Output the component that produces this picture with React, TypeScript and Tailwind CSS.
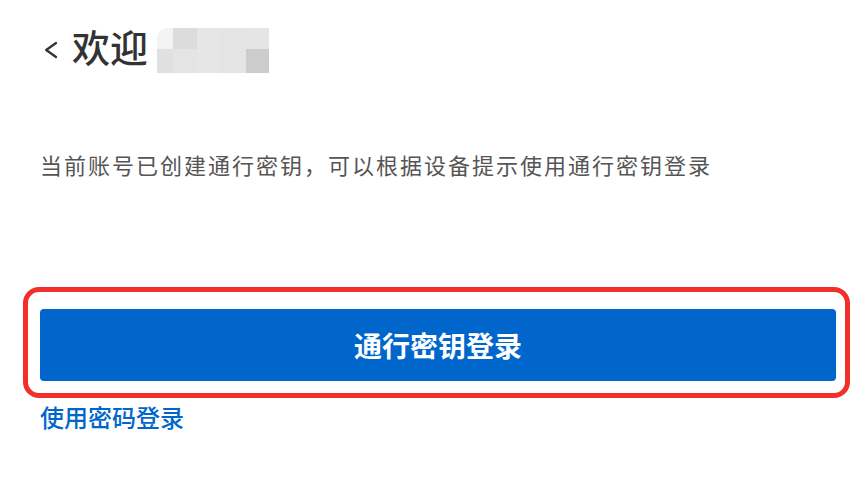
const blurCells = [
  'bg-[#f3f3f3] rounded-tl-[10px]',
  'bg-[#dcdcdc]',
  'bg-[#e6e6e6]',
  'bg-[#e4e4e4]',
  'bg-[#e5e5e5]',
  'bg-[#e0e0e0]',
  'bg-[#e4e4e4]',
  'bg-[#e6e6e6]',
  'bg-[#e4e4e4]',
  'bg-[#cccccc]',
];

const BackIcon = () => (
  <svg width="16" height="18" viewBox="0 0 16 18" fill="none" className="ml-[3px] mt-[7px]">
    <path d="M13 2 L3.2 9 L13 16" stroke="#333333" strokeWidth="2.3" strokeLinecap="round" strokeLinejoin="round" />
  </svg>
);

export default function App() {
  return (
    <div
      className="relative w-[864px] h-[478px] bg-white px-10 overflow-hidden"
      style={{ fontFamily: '"Noto Sans CJK SC", "Noto Sans", sans-serif' }}
    >
      {/* header */}
      <div className="flex items-center pt-[22px] h-[70px]">
        <BackIcon />
        <span className="ml-[13px] text-[38px] leading-[48px] font-medium text-[#333333]">欢迎</span>
        <div className="ml-[9px] mt-[8px] grid grid-cols-[16px_24px_24px_25px_23px] grid-rows-[21px_24px]">
          {blurCells.map((c, i) => (
            <div key={i} className={c} />
          ))}
        </div>
      </div>

      <p className="mt-[78px] text-[22px] leading-[32px] tracking-[2px] text-[#555555] whitespace-nowrap">
        当前账号已创建通行密钥，可以根据设备提示使用通行密钥登录
      </p>

      <button className="mt-[129px] w-[796px] h-[72px] rounded-[4px] bg-[#0066cc] text-white text-[28px] font-semibold flex items-center justify-center">
        通行密钥登录
      </button>

      <a className="block mt-[20px] text-[24px] leading-[32px] font-medium text-[#0066cc] cursor-pointer">
        使用密码登录
      </a>

      {/* highlight annotation */}
      <div className="absolute left-[23px] top-[287px] w-[827px] h-[111px] border-[5px] border-[#f22f2a] rounded-[16px] pointer-events-none" />
    </div>
  );
}
